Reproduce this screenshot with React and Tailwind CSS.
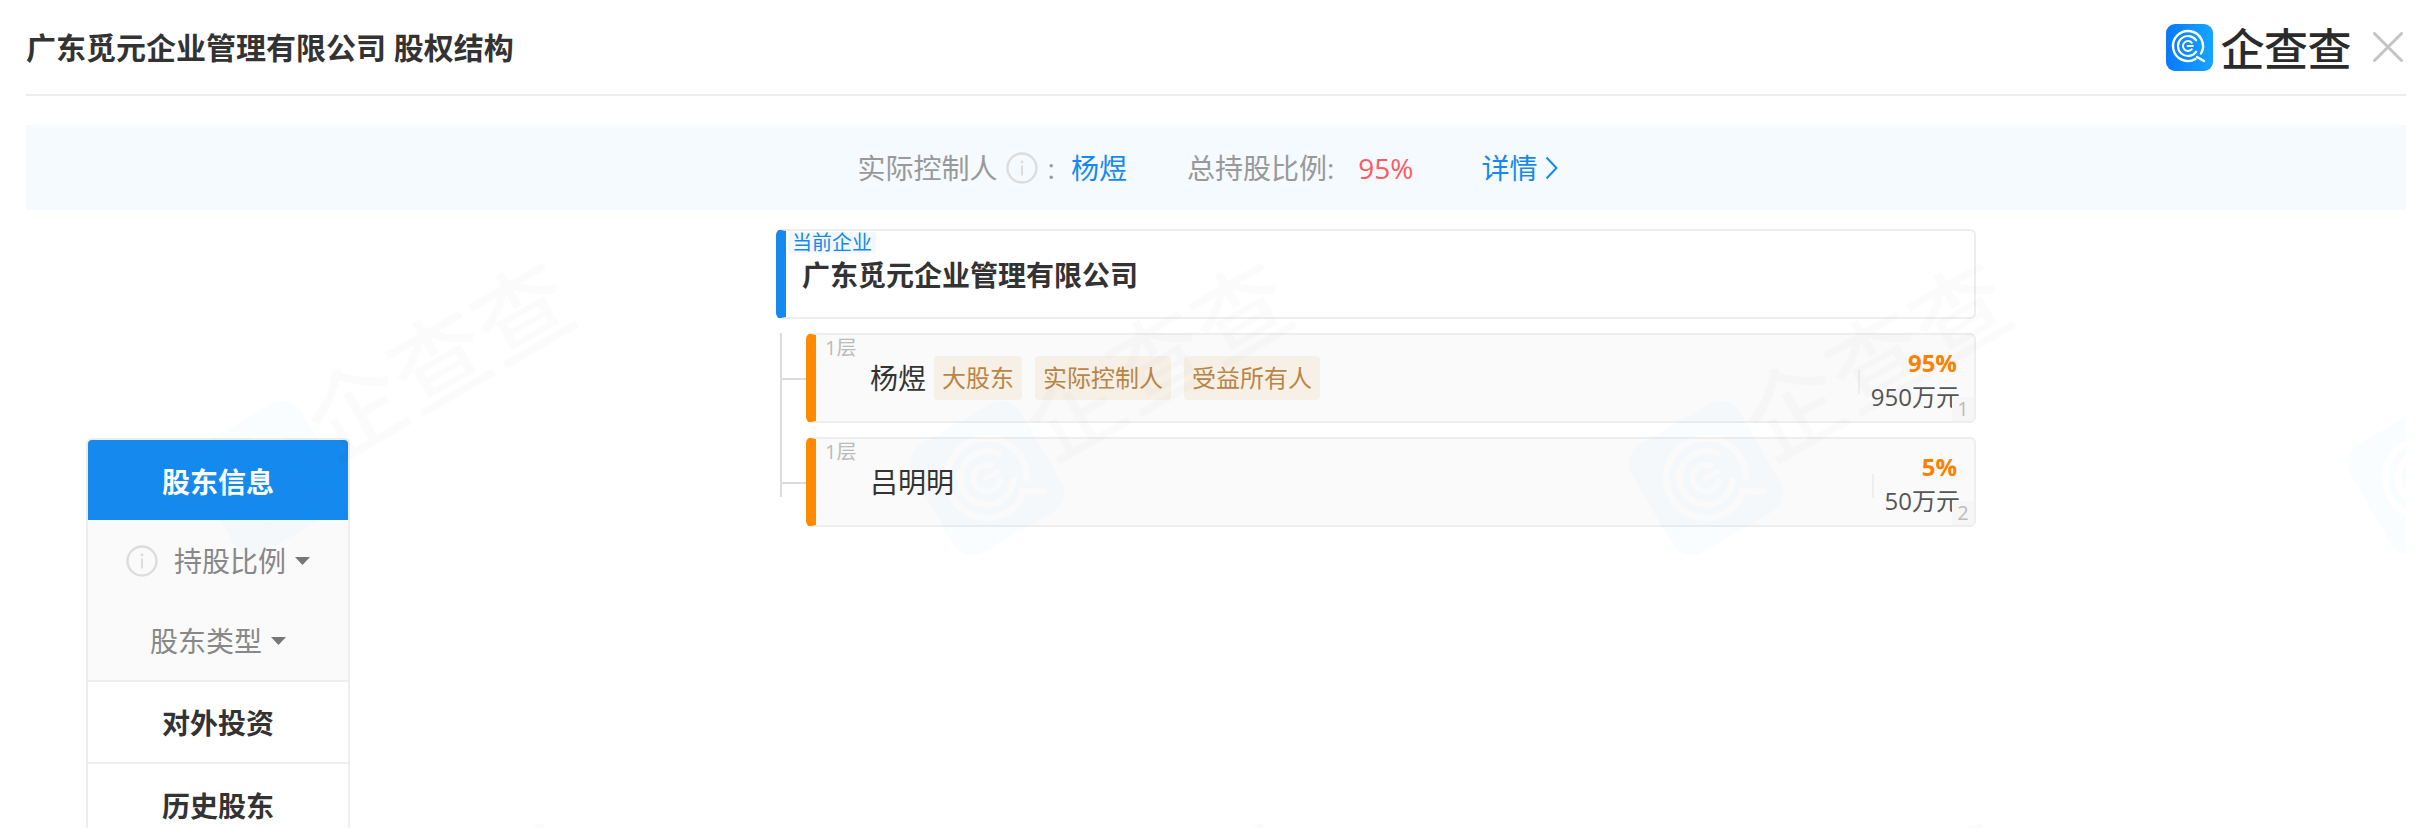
import React from "react";

const FONT = `"Open Sans", "Noto Sans CJK SC", sans-serif`;

const rows = [
  {
    name: "杨煜",
    tags: ["大股东", "实际控制人", "受益所有人"],
    pct: "95%",
    amount: "950万元",
    index: 1,
    tick: "right-[114px]",
  },
  {
    name: "吕明明",
    tags: [],
    pct: "5%",
    amount: "50万元",
    index: 2,
    tick: "right-[100px]",
  },
];

// rings of the qcc logo, 47x47 box
function LogoRings({ stroke }) {
  return (
    <g fill="none" stroke={stroke} strokeLinecap="round">
      <path d="M35 29.5A15 15 0 1 0 29.5 35" strokeWidth="2.4" />
      <path d="M31 33L38 37" strokeWidth="2.4" />
      <path d="M30.2 16.3A10 10 0 1 0 30.2 27.7" strokeWidth="2.2" />
      <path d="M25.8 18.8A5 5 0 1 0 25.8 25.2" strokeWidth="2" />
      <path d="M21.5 22H27" strokeWidth="1.8" />
    </g>
  );
}

function Watermark() {
  const codes = [];
  for (let i = -6; i < 16; i++) {
    for (let j = -8; j < 7; j++) {
      const x = 605 + 163 * i + 110 * j;
      const y = 700 - 20 * i + 113 * j;
      if (x > -200 && x < 2500 && y > -50 && y < 1000) codes.push([x, y]);
    }
  }
  const marks = [
    [0, 0],
    [719, 0],
    [1438, 0],
    [0, 560],
    [719, 560],
    [1438, 560],
  ];
  return (
    <svg
      className="absolute left-0 top-0 w-[2406px] h-[828px] pointer-events-none"
      viewBox="0 0 2406 828"
    >
      <defs>
        <mask id="wm-rings" maskUnits="userSpaceOnUse" x="-100" y="-100" width="200" height="200">
          <rect x="-100" y="-100" width="200" height="200" fill="white" />
          <g transform="scale(2.66) translate(-22,-22)">
            <LogoRings stroke="black" />
          </g>
        </mask>
      </defs>
      {[245, 964, 1683, 2402].map((bx) => (
        <g key={bx} transform={`translate(${bx + 23} 478) rotate(-30)`}>
          <rect
            x="-62.5"
            y="-62.5"
            width="125"
            height="125"
            rx="22"
            fill="rgba(0,140,255,0.018)"
            mask="url(#wm-rings)"
          />
        </g>
      ))}
      {marks.map(([dx, dy]) => (
        <g key={`${dx}-${dy}`} transform={`translate(${dx} ${dy}) rotate(-30 450 380)`} fill="rgba(0,0,0,0.016)">
          <text x="450" y="352" textAnchor="middle" dominantBaseline="central" fontSize="96" fontWeight="500" fontFamily="Noto Sans CJK SC">
            企查查
          </text>
          <text x="450" y="424" textAnchor="middle" dominantBaseline="central" fontSize="40" fontWeight="600" letterSpacing="14" fontFamily="Open Sans">
            Qcc.com
          </text>
        </g>
      ))}
      {codes.map(([x, y]) => (
        <text
          key={`${x}-${y}`}
          x={x}
          y={y}
          transform={`rotate(-45 ${x} ${y})`}
          fontSize="20"
          fontWeight="600"
          letterSpacing="14"
          fontFamily="Open Sans"
          fill="rgba(0,0,0,0.016)"
        >
          88FB2MS
        </text>
      ))}
    </svg>
  );
}

function InfoIcon() {
  return (
    <svg width="32" height="32" viewBox="0 0 32 32" className="shrink-0">
      <circle cx="16" cy="16" r="14.5" fill="none" stroke="#dcdcdc" strokeWidth="2.4" />
      <circle cx="16" cy="10" r="1.4" fill="#dcdcdc" />
      <rect x="15" y="13.5" width="2" height="10" fill="#dcdcdc" />
    </svg>
  );
}

function Caret() {
  return (
    <svg width="15" height="8" viewBox="0 0 15 8" className="shrink-0">
      <polygon points="0,0 15,0 7.5,8" fill="#777" />
    </svg>
  );
}

function Logo() {
  return (
    <div className="flex items-center">
      <svg width="47" height="47" viewBox="0 0 47 47">
        <defs>
          <linearGradient id="logo-bg" x1="0" y1="0" x2="1" y2="0">
            <stop offset="0" stopColor="#0a78fb" />
            <stop offset="1" stopColor="#14a6ff" />
          </linearGradient>
        </defs>
        <rect width="47" height="47" rx="9" fill="url(#logo-bg)" />
        <LogoRings stroke="white" />
      </svg>
      <span className="ml-[8px] text-[44px] leading-[47px] font-medium text-[#2b2b2b] tracking-[-0.5px] font-['Noto_Sans_CJK_SC']">
        企查查
      </span>
    </div>
  );
}

function ShareRow({ row }) {
  return (
    <div className="relative pl-[30px] mt-[14px]">
      <div className="absolute left-[4px] top-1/2 w-[26px] h-[2px] bg-[#dcdcdc]" />
      <div className="relative flex items-center h-[90px] rounded-md border-2 border-[#eee] border-l-[10px] border-l-[#ff8a00] bg-[#fafafa]">
        <span className="absolute left-[9px] top-[1px] text-[20px] leading-[24px] text-[#bbb]">1层</span>
        <span className="ml-[54px] text-[28px] text-[#333]">{row.name}</span>
        <div className="flex ml-[8px] gap-[13px]">
          {row.tags.map((tag) => (
            <span key={tag} className="h-[44px] px-[8px] rounded bg-[#f7f0e6] text-[24px] leading-[44px] text-[#b98646]">
              {tag}
            </span>
          ))}
        </div>
        <div className={`absolute ${row.tick} top-[35px] w-[2px] h-[24px] bg-[#eee]`} />
        <div className="ml-auto mr-[14px] mt-[4px] text-right">
          <div className="text-[24px] leading-[34px] font-bold text-[#ff8000] pr-[3px]">{row.pct}</div>
          <div className="text-[24px] leading-[34px] text-[#555]">{row.amount}</div>
        </div>
        <span className="absolute right-0 bottom-0 w-[22px] h-[24px] bg-[#f6f6f6] text-center text-[20px] leading-[24px] text-[#bbb]">
          {row.index}
        </span>
      </div>
    </div>
  );
}

export default function App() {
  return (
    <div className="relative h-[828px] w-full overflow-hidden bg-white" style={{ fontFamily: FONT }}>
      <div className="ml-[26px] mr-[22px]">
        <div className="flex items-center justify-between h-[96px] border-b-2 border-[#eee]">
          <h1 className="text-[30px] font-bold text-[#333]">广东觅元企业管理有限公司 股权结构</h1>
          <div className="flex items-center">
            <Logo />
            <svg width="30" height="30" viewBox="0 0 30 30" className="ml-[22px] mr-[3px]">
              <path d="M1.5 1.5L28.5 28.5M28.5 1.5L1.5 28.5" stroke="#c4c4c4" strokeWidth="3" strokeLinecap="round" />
            </svg>
          </div>
        </div>

        <div className="flex items-center justify-center pr-[16px] mt-[29px] h-[85px] bg-[#f5fafe] text-[28px] text-[#999]">
          <span>实际控制人</span>
          <span className="ml-[8px]"><InfoIcon /></span>
          <span className="ml-[10px]">:</span>
          <span className="ml-[16px] text-[#1589ee]">杨煜</span>
          <span className="ml-[60px]">总持股比例:</span>
          <span className="ml-[24px] text-[#ff5a5f]">95%</span>
          <span className="ml-[68px] text-[#1589ee]">详情</span>
          <svg width="13" height="24" viewBox="0 0 13 24" className="ml-[8px]">
            <path d="M1.5 1.5L11.5 12L1.5 22.5" fill="none" stroke="#1589ee" strokeWidth="2" />
          </svg>
        </div>
      </div>

      <div className="flex items-start">
        <div className="ml-[86px] mt-[228px] w-[264px] border-x-2 border-t-2 border-[#eee] rounded-t-md shrink-0 text-[28px]">
          <div className="h-[80px] pt-[3px] flex items-center justify-center rounded-t bg-[#1589ee] font-bold text-white">股东信息</div>
          <div className="bg-[#fafafa] text-[#888]">
            <div className="h-[80px] pt-[2px] flex items-center justify-center">
              <InfoIcon />
              <span className="ml-[16px]">持股比例</span>
              <span className="ml-[9px]"><Caret /></span>
            </div>
            <div className="h-[80px] pt-[2px] flex items-center justify-center">
              <span>股东类型</span>
              <span className="ml-[9px]"><Caret /></span>
            </div>
          </div>
          <div className="h-[82px] pt-[2px] flex items-center justify-center border-t-2 border-[#eee] font-bold text-[#333]">对外投资</div>
          <div className="h-[82px] pt-[3px] flex items-center justify-center border-t-2 border-[#eee] font-bold text-[#333]">历史股东</div>
        </div>

        <div className="ml-[426px] mt-[19px] w-[1200px] shrink-0">
          <div className="relative h-[90px] rounded-md border-2 border-[#eee] border-l-[10px] border-l-[#1589ee] bg-white">
            <span className="absolute left-[2px] top-[1px] px-[4px] rounded bg-[#f2f8fe] text-[20px] leading-[21px] text-[#1589ee]">当前企业</span>
            <div className="pl-[16px] pt-[24px] text-[28px] leading-[40px] font-bold text-[#333]">广东觅元企业管理有限公司</div>
          </div>
          <div className="relative">
            <div className="absolute left-[4px] top-0 w-[2px] h-[164px] bg-[#dcdcdc]" />
            {rows.map((row) => (
              <ShareRow key={row.index} row={row} />
            ))}
          </div>
        </div>
      </div>

      <Watermark />
    </div>
  );
}
